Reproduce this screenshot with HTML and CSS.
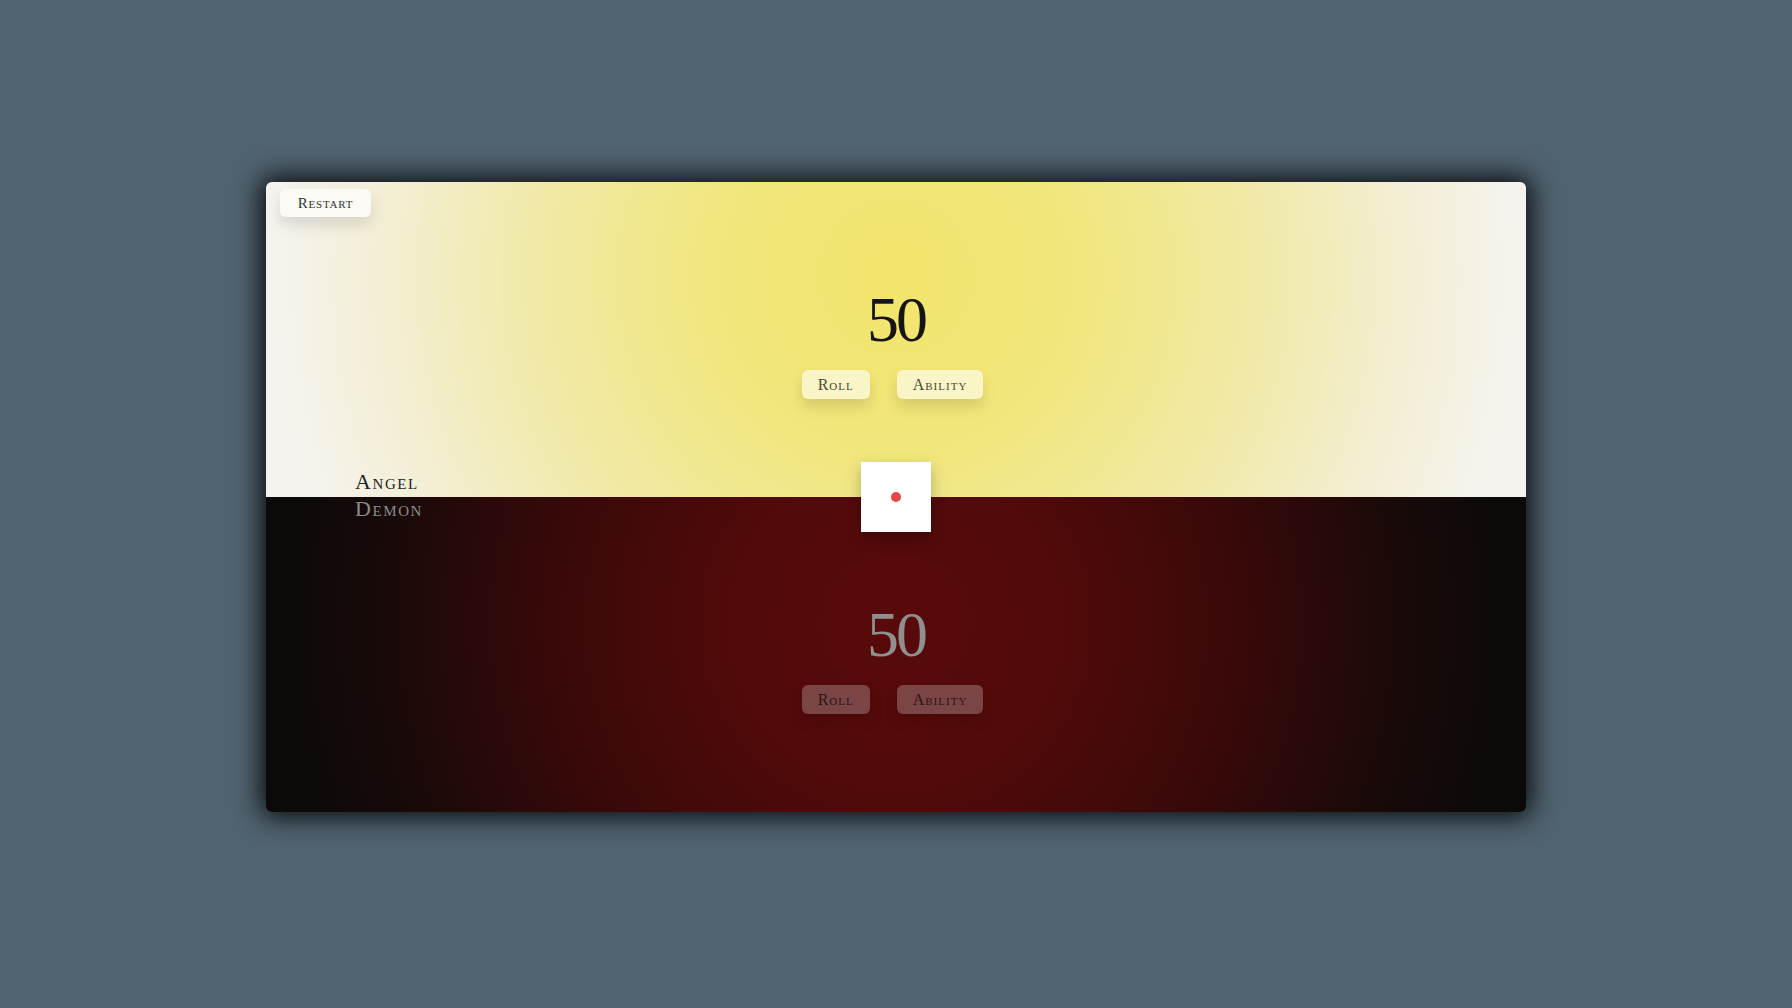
FILE: index.html
```html
<!DOCTYPE html>
<html>
<head>
<meta charset="utf-8">
<link rel="stylesheet" href="styles.css">
</head>
<body>
<div class="board">
  <button class="restart">Restart</button>
  <section class="half angel">
    <div class="score">50</div>
    <div class="actions">
      <button class="btn">Roll</button>
      <button class="btn">Ability</button>
    </div>
  </section>
  <section class="half demon">
    <div class="score">50</div>
    <div class="actions">
      <button class="btn">Roll</button>
      <button class="btn">Ability</button>
    </div>
  </section>
  <div class="labels">
    <span class="label-angel">Angel</span>
    <span class="label-demon">Demon</span>
  </div>
  <div class="die"><span class="pip"></span></div>
</div>
</body>
</html>
```

FILE: styles.css
```css
html, body {
  margin: 0;
  padding: 0;
}
body {
  background: #506370;
  height: 100vh;
  display: flex;
  align-items: center;
  justify-content: center;
  padding-bottom: 14px;
  box-sizing: border-box;
  font-family: "Liberation Serif", "DejaVu Serif", serif;
}
.board {
  position: relative;
  width: 1260px;
  height: 630px;
  border-radius: 6px;
  display: flex;
  flex-direction: column;
  box-shadow: 0 0 26px 5px rgba(0, 0, 0, 0.9);
}
.half {
  flex: 1;
  display: flex;
  flex-direction: column;
  align-items: center;
  padding-top: 106px;
  box-sizing: border-box;
}
.angel {
  border-radius: 6px 6px 0 0;
  background: radial-gradient(circle 620px at 50% 30%, #f2e56c 0%, #f1e67b 28%, #f1e9a6 58%, #f3efd6 84%, #f5f3ed 100%);
}
.demon {
  border-radius: 0 0 6px 6px;
  background: radial-gradient(circle 620px at 50% 40%, #590a0a 0%, #510a0a 28%, #360909 58%, #170a09 84%, #0b0a09 100%);
}
.score {
  font-size: 64px;
  line-height: 1;
  letter-spacing: -3px;
  height: 64px;
}
.angel .score { color: #151515; }
.demon .score { color: #8f8f8f; }
.actions {
  display: flex;
  gap: 27px;
  margin-top: 18px;
  margin-right: 7px;
}
button {
  font-family: inherit;
  font-variant: small-caps;
  border: none;
  cursor: pointer;
}
.btn {
  height: 29px;
  padding: 0 16px;
  border-radius: 6px;
  font-size: 16px;
  letter-spacing: 1px;
  box-shadow: 0 8px 14px rgba(0, 0, 0, 0.12);
}
.angel .btn {
  background: #faf5c6;
  color: #4a473a;
}
.demon .btn {
  background: #7b4546;
  color: #2a1414;
}
.restart {
  position: absolute;
  top: 7px;
  left: 14px;
  width: 91px;
  height: 28px;
  border-radius: 6px;
  background: #fbfaf4;
  color: #333;
  font-size: 15px;
  letter-spacing: 0.8px;
  box-shadow: 0 8px 16px rgba(0, 0, 0, 0.12);
}
.labels {
  position: absolute;
  left: 89px;
  top: 286px;
  display: flex;
  flex-direction: column;
  font-variant: small-caps;
  font-size: 22px;
  line-height: 27px;
  letter-spacing: 1.6px;
}
.label-angel { color: #222; }
.label-demon { color: #8c8c8c; }
.die {
  position: absolute;
  left: 595px;
  top: 280px;
  width: 70px;
  height: 70px;
  background: #fff;
  display: flex;
  align-items: center;
  justify-content: center;
  box-shadow: 0 6px 14px rgba(0, 0, 0, 0.25);
}
.pip {
  width: 10px;
  height: 10px;
  border-radius: 50%;
  background: #e64646;
}
```
